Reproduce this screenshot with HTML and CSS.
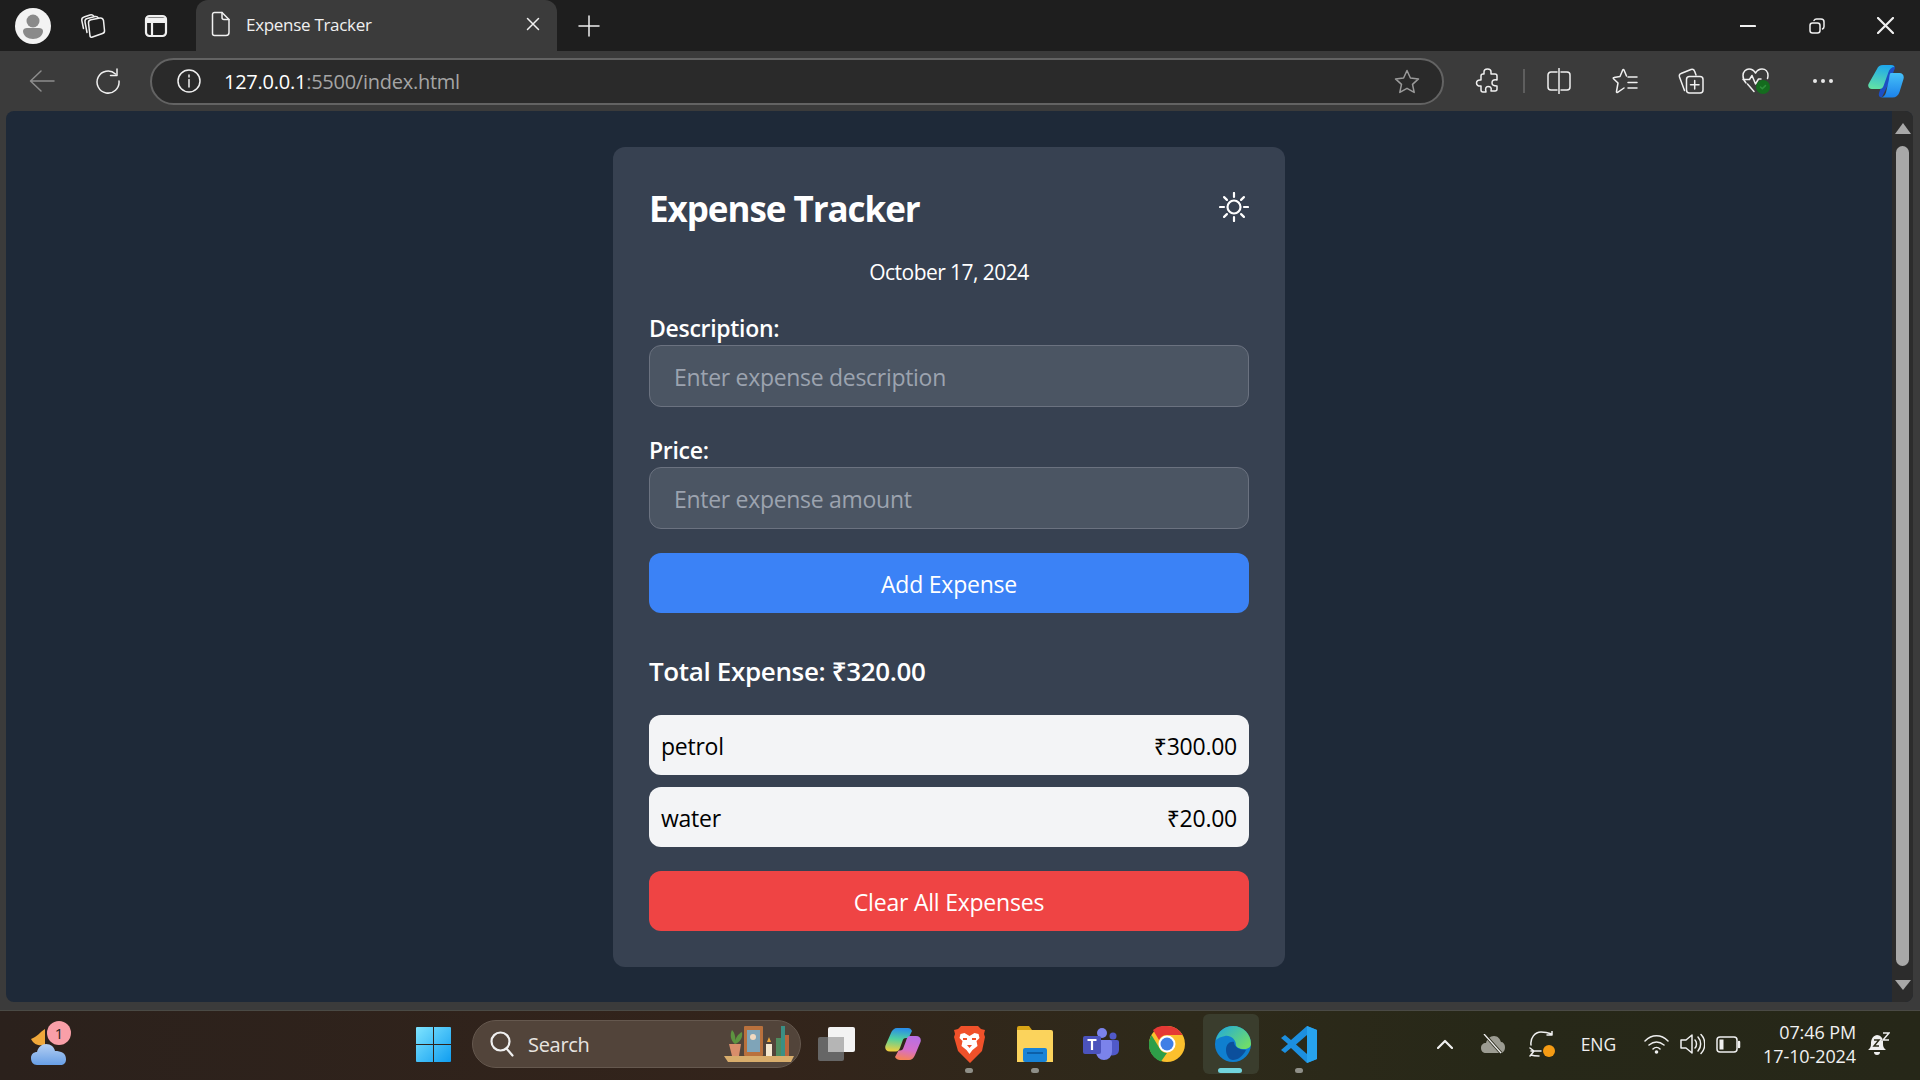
FILE: index.html
```html
<!DOCTYPE html>
<html lang="en">

<head>
    <meta charset="UTF-8">
    <meta name="viewport" content="width=device-width, initial-scale=1.0">
    <title>Expense Tracker</title>
    <link rel="stylesheet" href="styles.css">
</head>

<body>

    <!-- Tab strip -->
    <div class="tabstrip">
        <div class="avatar">
            <svg width="36" height="36" viewBox="0 0 36 36">
                <circle cx="18" cy="18" r="18" fill="#f3f3f3" />
                <circle cx="18" cy="13" r="6.500" fill="#8a8a8a" />
                <path d="M8 23c0-2 2-3 4-3h12c2 0 4 1 4 3 0 5-5 8-10 8s-10-3-10-8z" fill="#8a8a8a" />
            </svg>
        </div>
        <div class="strip-btn strip-btn-first">
            <svg width="26" height="26" viewBox="0 0 26 26" class="ico">
                <path d="M10 23l-1.500-13c-.2-2 .8-3 2.500-3.300l9-1.700c2-.3 3 .7 3.500 2.500l1 10c.2 1.500-.5 2.500-2 3l-10 3.500c-1.500.500-2.300 0-2.500-1z" />
                <path d="M7 19.500L5 9c-.3-2 .5-3.200 2.300-3.500l7.700-2c1.700-.3 2.700.2 3.300 1.500" />
                <path d="M3.500 15.500L1.800 7.500c-.3-2 .5-3 2.200-3.500l6-2c1.800-.4 3 0 3.700 1.200" />
            </svg>
        </div>
        <div class="strip-btn">
            <svg width="24" height="24" viewBox="0 0 24 24" class="ico ico-thick">
                <rect x="2" y="2" width="20" height="20" rx="3.500" />
                <path d="M2.500 4.500h19V8h-19zM8 8v14" fill="#f3f3f3" />
            </svg>
        </div>
        <div class="tab">
            <svg width="20" height="26" viewBox="0 0 20 26" class="ico">
                <path d="M3.500 1.500h7.500l7 7v13a3 3 0 0 1-3 3h-11.500a2 2 0 0 1-2-2v-19a2 2 0 0 1 2-2z" />
                <path d="M11 1.500v5a2 2 0 0 0 2 2h5" />
            </svg>
            <span class="tab-title">Expense Tracker</span>
            <svg width="14" height="14" viewBox="0 0 14 14" class="ico tab-close">
                <path d="M1.500 1.500l11 11M12.500 1.500l-11 11" />
            </svg>
        </div>
        <div class="new-tab">
            <svg width="22" height="22" viewBox="0 0 22 22" class="ico">
                <path d="M11 1v20M1 11h20" />
            </svg>
        </div>
        <div class="window-btns">
            <div class="win-btn">
                <svg width="16" height="4" viewBox="0 0 16 4" class="ico ico-thick"><path d="M0 2h15" /></svg>
            </div>
            <div class="win-btn">
                <svg width="16" height="16" viewBox="0 0 16 16" class="ico">
                    <rect x="1" y="5" width="10" height="10" rx="2.500" />
                    <path d="M5 2.500c.5-1 1-1.500 2.500-1.500H12a3 3 0 0 1 3 3v4.500c0 1.500-.5 2-1.500 2.500" />
                </svg>
            </div>
            <div class="win-btn">
                <svg width="17" height="17" viewBox="0 0 17 17" class="ico ico-thick"><path d="M1 1l15 15M16 1L1 16" /></svg>
            </div>
        </div>
    </div>

    <!-- Toolbar -->
    <div class="toolbar">
        <div class="tool-btn">
            <svg width="26" height="24" viewBox="0 0 26 24" class="ico ico-dim">
                <path d="M25 12H2M12 2L1.500 12 12 22" />
            </svg>
        </div>
        <div class="tool-btn">
            <svg width="26" height="26" viewBox="0 0 26 26" class="ico">
                <path d="M20.500 6A11 11 0 1 0 24 13" />
                <path d="M22 1v6.500h-6.500" />
            </svg>
        </div>
        <div class="address">
            <svg width="24" height="24" viewBox="0 0 24 24" class="ico">
                <circle cx="12" cy="12" r="11" />
                <path d="M12 10.500V18M12 6v2" />
            </svg>
            <span class="url"><span class="url-host">127.0.0.1</span>:5500/index.html</span>
            <svg width="26" height="25" viewBox="0 0 26 25" class="ico ico-star">
                <path d="M13 1.500l3.400 7.500 8.100.9-6 5.500 1.700 8-7.200-4.100-7.200 4.100 1.700-8-6-5.500 8.100-.9z" />
            </svg>
        </div>
        <div class="tool-btn tool-btn-puzzle">
            <svg width="24" height="26" viewBox="0 0 24 26" class="ico">
                <path d="M9 4c0-4 7-4 7 0 0 1 0 1.500 0 2h4c1 0 2 1 2 2v4c-4-1-5 1-5 3s1 3 5 3v3c0 1-1 2-2 2h-4c1-4-1-4.500-3-4.500S10 20 11 24H8c-1 0-2-1-2-2v-4c-6 1-6-7 0-6V8c0-1 1-2 2-2h1z" />
            </svg>
        </div>
        <div class="tool-divider"></div>
        <div class="tool-btn">
            <svg width="24" height="26" viewBox="0 0 24 26" class="ico">
                <path d="M10 4H4a3 3 0 0 0-3 3v12a3 3 0 0 0 3 3h6M14 4h6a3 3 0 0 1 3 3v12a3 3 0 0 1-3 3h-6M12 0.500v25" />
            </svg>
        </div>
        <div class="tool-btn">
            <svg width="26" height="26" viewBox="0 0 26 26" class="ico">
                <path d="M14.500 8l-2.500-6c-.3-.7-1-.7-1.300 0L8 8.500l-6 1c-.8.100-1 .8-.5 1.300L6 15l-1.500 8.500c-.1.800.5 1.100 1.100.8l6.400-4.300" />
                <path d="M16 9h9M16 14.500h9M16 20h9" />
            </svg>
        </div>
        <div class="tool-btn">
            <svg width="26" height="26" viewBox="0 0 26 26" class="ico">
                <path d="M6.500 22.500L1.500 9c-.5-1.500 0-3 1.500-3.500L13 1.500c1.500-.5 3 0 3.500 1.500l1.500 4" />
                <rect x="8.500" y="8.500" width="16.500" height="16.500" rx="3" />
                <path d="M16.700 12.500v8.500M12.500 16.700h8.500" />
            </svg>
        </div>
        <div class="tool-btn">
            <svg width="30" height="28" viewBox="0 0 30 28" class="ico">
                <path d="M4 16C2 14 1 11 1 8.500 1 4.500 4 2 7 2c3 0 5 1.500 6.500 4C15 3.500 17 2 20 2c3.500 0 6 2.500 6 6.500 0 1-.2 2-.5 3" />
                <path d="M1 12.500h6.500l2.500-4 3.500 8.500 3-5h2.500M5.500 17l6.500 7.500" />
                <circle cx="21" cy="20" r="7" fill="#146c1e" stroke="none" />
                <path d="M18.500 20l1.800 1.800 3.200-3.200" stroke="#2f8f3c" />
            </svg>
        </div>
        <div class="tool-btn">
            <svg width="20" height="4" viewBox="0 0 20 4">
                <circle cx="2" cy="2" r="2" fill="#e8e8e8" />
                <circle cx="10" cy="2" r="2" fill="#e8e8e8" />
                <circle cx="18" cy="2" r="2" fill="#e8e8e8" />
            </svg>
        </div>
        <div class="tool-btn tool-btn-copilot">
            <svg width="36" height="33" viewBox="0 0 36 33">
                <defs>
                    <linearGradient id="cpA" x1="0.500" y1="0" x2="0.300" y2="1">
                        <stop offset="0" stop-color="#1fa8ec" />
                        <stop offset="1" stop-color="#62e2a4" />
                    </linearGradient>
                    <linearGradient id="cpB" x1="0.500" y1="0" x2="0.500" y2="1">
                        <stop offset="0" stop-color="#45c0f8" />
                        <stop offset="1" stop-color="#1c82ea" />
                    </linearGradient>
                </defs>
                <path d="M16 0h7c2 0 4 1 4 3l-5 13-8 16c-2 1-4-1-3-4l3-9z" fill="#1c4fc4" />
                <path d="M9 4c1-2.500 3-4 6-4h8c2 0 3 .700 3.500 2-3 0-5 2-6 5l-5 14c-.7 2-2 3-4 3H4c-3 0-4.500-2.500-3.500-5z" fill="url(#cpA)" />
                <path d="M23 8h8.500c3 0 5 2.500 4 6l-4 13c-1 3.500-3.500 5.500-7 5.500H12c3 0 5-1.500 6-5l3-13c.500-3 .500-6.500 2-6.500z" fill="url(#cpB)" />
            </svg>
        </div>
    </div>

    <!-- Browser viewport -->
    <div class="frame">
        <div class="viewport">
            <main class="page">
                <div class="card">
                    <div class="card-head">
                        <h1>Expense Tracker</h1>
                        <svg width="30" height="30" viewBox="0 0 30 30" class="sun">
                            <circle cx="15" cy="15" r="6.500" />
                            <path d="M15 1v4M15 25v4M1 15h4M25 15h4M5.100 5.100l2.800 2.800M22.100 22.100l2.800 2.800M5.100 24.900l2.800-2.800M22.100 7.900l2.800-2.800" />
                        </svg>
                    </div>
                    <p class="date">October 17, 2024</p>
                    <form>
                        <label class="field-label" for="description">Description:</label>
                        <input type="text" id="description" class="form-input" placeholder="Enter expense description">
                        <label class="field-label field-label-next" for="price">Price:</label>
                        <input type="text" id="price" class="form-input" placeholder="Enter expense amount">
                        <button type="button" class="btn btn-add">Add Expense</button>
                    </form>
                    <h2 class="total">Total Expense: ₹320.00</h2>
                    <ul class="expense-list">
                        <li class="expense-item"><span>petrol</span><span>₹300.00</span></li>
                        <li class="expense-item"><span>water</span><span>₹20.00</span></li>
                    </ul>
                    <button type="button" class="btn btn-clear">Clear All Expenses</button>
                </div>
            </main>
            <div class="scrollbar">
                <div class="arrow-up"></div>
                <div class="thumb"></div>
                <div class="arrow-down"></div>
            </div>
        </div>
    </div>

    <!-- Windows taskbar -->
    <footer class="taskbar">
        <div class="weather">
            <svg width="38" height="44" viewBox="0 0 38 44">
                <defs>
                    <linearGradient id="cloud" x1="0" y1="0" x2="0" y2="1">
                        <stop offset="0" stop-color="#b4cff2" />
                        <stop offset="1" stop-color="#689fe6" />
                    </linearGradient>
                </defs>
                <path d="M15 7C10 10 7 15 1 17c3 6 8 7 14 6z" fill="#f0a83a" />
                <path d="M7 43c-4 0-6-3-6-7s3-6 6-6c1-5 5-8 9-8 5 0 8 3 9 7 6 0 11 2 11 8 0 4-2 6-6 6z" fill="url(#cloud)" />
            </svg>
            <span class="weather-badge">1</span>
        </div>

        <div class="task-center">
            <svg width="35" height="35" viewBox="0 0 35 35" class="win-logo">
                <defs>
                    <linearGradient id="winA" x1="0" y1="0" x2="1" y2="1">
                        <stop offset="0" stop-color="#7fe4ff" />
                        <stop offset="1" stop-color="#0f9df0" />
                    </linearGradient>
                </defs>
                <path d="M1 0h16v17H0V1a1 1 0 0 1 1-1zM18 0h16a1 1 0 0 1 1 1v16H18zM0 18h17v17H1a1 1 0 0 1-1-1zM18 18h17v16a1 1 0 0 1-1 1H18z" fill="url(#winA)" />
            </svg>
            <div class="search">
                <svg width="24" height="26" viewBox="0 0 24 26" class="ico ico-thick">
                    <circle cx="10.500" cy="10.500" r="9" />
                    <path d="M16.500 17.500l6 7" />
                </svg>
                <span class="search-text">Search</span>
                <svg width="70" height="44" viewBox="0 0 70 44" class="search-art">
                    <path d="M0 34h70l-3 6H4z" fill="#d8ad6c" />
                    <path d="M5 22h12l-2 12H8z" fill="#d98e6b" />
                    <path d="M11 22C6 18 6 12 8 8c3 3 4 8 3 14zM11 22c0-6 3-10 7-12 1 6-2 10-7 12z" fill="#5d9440" />
                    <rect x="20" y="4" width="19" height="30" rx="1" fill="#b9713d" />
                    <rect x="23" y="8" width="13" height="22" fill="#7fa4b8" />
                    <circle cx="29" cy="15" r="3" fill="#f2d9c0" />
                    <rect x="42" y="22" width="6" height="12" fill="#f4e8cf" />
                    <path d="M45 15l2 5h-4z" fill="#f0a83a" />
                    <rect x="52" y="16" width="5" height="18" fill="#4f8a5e" />
                    <rect x="57" y="4" width="4" height="30" fill="#3b8f85" />
                    <rect x="61" y="13" width="4" height="21" fill="#b9663d" />
                </svg>
            </div>
            <div class="task-slot">
                <svg width="38" height="34" viewBox="0 0 38 34">
                    <rect x="0" y="10" width="26" height="24" rx="2" fill="#666" />
                    <rect x="10" y="0" width="27" height="25" rx="2" fill="#f3f3f3" />
                    <rect x="10" y="10" width="16" height="15" fill="#b5b5b5" />
                </svg>
            </div>
            <div class="task-slot">
                <svg width="36" height="34" viewBox="0 0 36 34">
                    <defs>
                        <linearGradient id="coA" x1="0.300" y1="0" x2="0.200" y2="1">
                            <stop offset="0" stop-color="#2a8fe8" />
                            <stop offset="0.450" stop-color="#4fd0a0" />
                            <stop offset="1" stop-color="#f6cf3a" />
                        </linearGradient>
                        <linearGradient id="coB" x1="0.700" y1="0" x2="0.500" y2="1">
                            <stop offset="0" stop-color="#b66fe6" />
                            <stop offset="0.600" stop-color="#d66fc8" />
                            <stop offset="1" stop-color="#f4825c" />
                        </linearGradient>
                    </defs>
                    <path d="M16 1h7c2 0 3 1 4 3l-3.500 7H21c-2 0-3 1-3.500 3L15 21c-1 2-2 3.500-4 3.500H5c-4 0-5.500-3-4.500-6L6 6c1-3 3.500-5 6-5z" fill="url(#coA)" />
                    <path d="M25 9h6c4 0 5.500 3 4.500 6L30 28c-1 3-3.500 5-6 5h-9c-2 0-4-1-5-3l3.500-6.500H15c2 0 3-1 3.500-3L21 14c.7-3 2-5 4-5z" fill="url(#coB)" />
                </svg>
            </div>
            <div class="task-slot task-running">
                <svg width="31" height="38" viewBox="0 0 31 38">
                    <path d="M7 1h17l3 3 4 1-1 4 1 3-3 14-12 12-12-12L0 12l1-3-1-4 4-1z" fill="#f0512a" />
                    <path d="M15.500 11l-5-3-4 1-1 4 3 3-1 5 5 4 3 4 3-4 5-4-1-5 3-3-1-4-4-1z" fill="#fff" />
                    <path d="M13 20h5l-2.500 3z" fill="#f0512a" />
                    <path d="M9 14h4M18 14h4" stroke="#f0512a" stroke-width="2" />
                </svg>
            </div>
            <div class="task-slot task-running">
                <svg width="36" height="36" viewBox="0 0 36 36">
                    <path d="M0 2a2 2 0 0 1 2-2h10l3 4H0z" fill="#d9a516" />
                    <path d="M0 4h34a2 2 0 0 1 2 2v30H0z" fill="#fbd35c" />
                    <rect x="6" y="22" width="24" height="14" rx="2" fill="#1883d7" />
                    <rect x="10" y="26" width="16" height="2" fill="#0c5fa8" />
                </svg>
            </div>
            <div class="task-slot">
                <svg width="36" height="32" viewBox="0 0 36 32">
                    <circle cx="19" cy="5" r="5" fill="#7b83eb" />
                    <circle cx="30" cy="8" r="3.500" fill="#5059c9" />
                    <path d="M24 12h10a2 2 0 0 1 2 2v8a6 6 0 0 1-10 4z" fill="#5059c9" />
                    <path d="M10 12h17a2 2 0 0 1 2 2v10a8 8 0 0 1-16 0z" fill="#7b83eb" />
                    <rect x="0" y="8" width="18" height="18" rx="2" fill="#4b53bc" />
                    <path d="M4.500 12h9M9 12v10" stroke="#fff" stroke-width="2.200" fill="none" />
                </svg>
            </div>
            <div class="task-slot">
                <svg width="36" height="36" viewBox="0 0 36 36">
                    <circle cx="18" cy="18" r="18" fill="#fbc02d" />
                    <path d="M18 0a18 18 0 0 1 15.600 9H18a9 9 0 0 0-8 5L4 4a18 18 0 0 1 14-4z" fill="#e53935" />
                    <path d="M2.500 9L11 23l-0 0a9 9 0 0 0 7 4l-6 8.500A18 18 0 0 1 2.500 9z" fill="#2e9e48" />
                    <circle cx="18" cy="18" r="8.500" fill="#fff" />
                    <circle cx="18" cy="18" r="6.500" fill="#3f7fe6" />
                </svg>
            </div>
            <div class="task-slot task-active">
                <div class="active-back"></div>
                <svg width="36" height="36" viewBox="0 0 36 36" class="edge-logo">
                    <defs>
                        <linearGradient id="edA" x1="0" y1="0" x2="1" y2="0.700">
                            <stop offset="0" stop-color="#1ea8e0" />
                            <stop offset="1" stop-color="#6fdc6a" />
                        </linearGradient>
                    </defs>
                    <circle cx="18" cy="18" r="18" fill="#0f7fd0" />
                    <path d="M1 14C3 5 10 0 18 0c10 0 18 8 18 18 0 3-3 5-7 5-5 0-8-2-8-4 0-6-6-10-11-9-4 .8-7 2-9 4z" fill="url(#edA)" />
                    <path d="M11 24c0-6 4-9 8-8 0 4 4 8 12 8-3 6-8 10-13 10-4 0-7-5-7-10z" fill="#0b4f9c" />
                </svg>
            </div>
            <div class="task-slot task-running">
                <svg width="36" height="37" viewBox="0 0 36 37">
                    <path d="M26 0l10 4v29l-10 4L10 22l-6 5-4-3 7-6-7-6 4-3 6 5z" fill="#1c8fdf" />
                    <path d="M26 9v19l-11-9.500z" fill="#2a2a19" />
                    <path d="M26 0l10 4v29l-10 4z" fill="#27a3ee" />
                </svg>
            </div>
        </div>

        <div class="tray">
            <svg width="16" height="10" viewBox="0 0 16 10" class="ico ico-thick tray-chevron">
                <path d="M1 9l7-7 7 7" />
            </svg>
            <svg width="25" height="20" viewBox="0 0 25 20" class="tray-cloud">
                <path d="M6 19c-3 0-5-2-5-5s2-5 5-5c1-4 4-7 8-7s6 3 7 6c2 0 4 2 4 5 0 4-2 6-5 6z" fill="#9c9c92" />
                <path d="M5 1l16 18" stroke="#2a2a19" stroke-width="3" />
                <path d="M4 0l17 19" stroke="#f0f0f0" stroke-width="1.300" />
            </svg>
            <div class="tray-sync">
                <svg width="25" height="26" viewBox="0 0 25 26" class="ico">
                    <path d="M2 14C1 7 6 1 12 1c4 0 8 1 11 2M23 0v4h-5M2 20h10M1 25l4-5-4-3M2 24c3 1 5 1 8 1" />
                </svg>
                <span class="sync-dot"></span>
            </div>
            <span class="tray-lang">ENG</span>
            <svg width="25" height="20" viewBox="0 0 25 20" class="ico tray-wifi">
                <path d="M1 7c7-7 16-7 23 0M5 11c5-4 10-4 15 0M9 15c2-2 5-2 7 0" />
                <circle cx="12.500" cy="18" r="1.800" fill="#f0f0f0" stroke="none" />
            </svg>
            <svg width="25" height="22" viewBox="0 0 25 22" class="ico tray-sound">
                <path d="M1 7h5l6-5v18l-6-5H1zM15 7c2 2 2 6 0 8M18 4c3.500 4 3.500 10 0 14M21 1.500c5 5 5 14 0 19" />
            </svg>
            <svg width="25" height="17" viewBox="0 0 25 17" class="ico tray-battery">
                <rect x="1" y="1" width="20" height="15" rx="3" />
                <rect x="3.500" y="3.500" width="4" height="10" fill="#f0f0f0" stroke="none" />
                <path d="M23 6v5" stroke-width="2.500" />
            </svg>
            <div class="clock">
                <span>07:46 PM</span>
                <span>17-10-2024</span>
            </div>
            <svg width="22" height="24" viewBox="0 0 22 24" class="tray-bell">
                <path d="M9 3C4 4 3 8 3 12c0 3-1 4-3 6h18c-2-2-3-3-3-6V9C15 6 12 3 9 3z" fill="#f0f0f0" />
                <path d="M6 20h6a3 3 0 0 1-6 0z" fill="#f0f0f0" />
                <path d="M6 8h5l-5 6h5M15 1h6l-6 7h6" stroke="#2a2a19" stroke-width="1.500" fill="none" />
                <path d="M15 1h6l-6 7h6" stroke="#f0f0f0" stroke-width="1.500" fill="none" />
            </svg>
        </div>
    </footer>

</body>

</html>
```

FILE: styles.css
```css
/* Basic layout */
body {
    font-family: "Open Sans", "Noto Sans", "DejaVu Sans", sans-serif;
    margin: 0;
    padding: 0;
    height: 100vh;
    display: flex;
    flex-direction: column;
    overflow: hidden;
    background-color: #3b3b3b;
}

/* Shared icon strokes */
.ico {
    fill: none;
    stroke: #f0f0f0;
    stroke-width: 1.500;
    stroke-linecap: round;
    stroke-linejoin: round;
    flex-shrink: 0;
}

.ico-thick {
    stroke-width: 2.200;
}

.ico-dim {
    stroke: #8d8d8d;
}

.ico-star {
    stroke: #9a9a9a;
    margin-left: auto;
}

/* Tab strip */
.tabstrip {
    height: 51px;
    flex-shrink: 0;
    background-color: #1e1e1e;
    display: flex;
    align-items: center;
    padding-left: 15px;
}

.avatar {
    display: flex;
}

.strip-btn {
    width: 63px;
    display: flex;
    justify-content: center;
}

.strip-btn-first {
    margin-left: 11px;
    width: 62px;
}

.tab {
    align-self: flex-end;
    margin-left: 9px;
    width: 361px;
    height: 51px;
    box-sizing: border-box;
    background-color: #3b3b3b;
    border-radius: 12px 12px 0 0;
    display: flex;
    align-items: center;
    padding: 0 17px 3px 15px;
    color: #f0f0f0;
}

.tab-title {
    margin-left: 15px;
    font-size: 17px;
    letter-spacing: -0.3px;
    white-space: nowrap;
}

.tab-close {
    margin-left: auto;
}

.new-tab {
    margin-left: 21px;
    display: flex;
}

.window-btns {
    margin-left: auto;
    display: flex;
    height: 100%;
}

.win-btn {
    width: 69px;
    display: flex;
    align-items: center;
    justify-content: center;
}

/* Toolbar */
.toolbar {
    height: 60px;
    flex-shrink: 0;
    background-color: #3b3b3b;
    display: flex;
    align-items: center;
    padding-left: 9px;
}

.tool-btn {
    width: 66px;
    display: flex;
    justify-content: center;
    flex-shrink: 0;
}

.tool-btn-puzzle {
    margin-left: 10px;
}

.tool-btn-copilot {
    width: 60px;
}

.tool-divider {
    width: 2px;
    height: 24px;
    background-color: #5e5e5e;
    margin: 0 1px 0 3px;
    flex-shrink: 0;
}

.address {
    width: 1294px;
    height: 47px;
    margin-left: 9px;
    box-sizing: border-box;
    flex-shrink: 0;
    border: 2px solid #636363;
    border-radius: 24px;
    background-color: #2a2a2a;
    display: flex;
    align-items: center;
    padding: 0 22px 0 25px;
}

.url {
    margin-left: 23px;
    font-size: 20px;
    letter-spacing: -0.25px;
    color: #a5a5a5;
}

.url-host {
    color: #fff;
}

/* Browser viewport */
.frame {
    flex: 1;
    min-height: 0;
    padding: 0 7px 8px 6px;
    display: flex;
}

.viewport {
    flex: 1;
    background-color: #1e2938;
    border-radius: 8px;
    display: flex;
    overflow: hidden;
}

.page {
    flex: 1;
    display: flex;
    justify-content: center;
    padding-top: 36px;
}

/* Expense card */
.card {
    width: 672px;
    height: 820px;
    box-sizing: border-box;
    background-color: #374151;
    border-radius: 12px;
    padding: 36px;
    color: #fff;
}

.card-head {
    display: flex;
    justify-content: space-between;
    align-items: center;
    height: 48px;
}

.card-head h1 {
    margin: 0;
    padding-top: 2px;
    font-size: 35px;
    font-weight: 700;
    letter-spacing: -1.05px;
}

.sun {
    fill: none;
    stroke: #fff;
    stroke-width: 2.200;
    stroke-linecap: round;
}

.date {
    margin: 23px 0 19px;
    height: 36px;
    line-height: 36px;
    text-align: center;
    font-size: 21px;
    letter-spacing: -0.55px;
}

.field-label {
    display: block;
    height: 36px;
    line-height: 38px;
    font-size: 23px;
    font-weight: 600;
    letter-spacing: -0.3px;
}

.field-label-next {
    margin-top: 24px;
}

.form-input {
    display: block;
    width: 100%;
    height: 62px;
    box-sizing: border-box;
    padding: 2px 24px 0;
    background-color: #4b5563;
    border: 1px solid #6b7280;
    border-radius: 12px;
    color: #fff;
    font-family: inherit;
    font-size: 23px;
    letter-spacing: -0.3px;
}

.form-input::placeholder {
    color: #9ca3af;
    opacity: 1;
}

.btn {
    display: block;
    width: 100%;
    height: 60px;
    padding: 2px 0 0;
    border: none;
    border-radius: 12px;
    color: #fff;
    font-family: inherit;
    font-size: 23px;
    letter-spacing: -0.22px;
    cursor: pointer;
}

.btn-add {
    margin-top: 24px;
    background-color: #3b82f6;
}

.btn-clear {
    margin-top: 24px;
    background-color: #ef4444;
}

.total {
    margin: 36px 0 24px;
    height: 42px;
    line-height: 44px;
    font-size: 26px;
    font-weight: 600;
    letter-spacing: -0.35px;
}

.expense-list {
    list-style: none;
    margin: 0;
    padding: 0;
    display: flex;
    flex-direction: column;
    gap: 12px;
}

.expense-item {
    height: 60px;
    box-sizing: border-box;
    padding: 2px 12px 0;
    background-color: #f3f4f6;
    border-radius: 12px;
    color: #000;
    font-size: 23px;
    letter-spacing: -0.25px;
    display: flex;
    align-items: center;
    justify-content: space-between;
}

/* Scrollbar */
.scrollbar {
    width: 21px;
    flex-shrink: 0;
    display: flex;
    flex-direction: column;
    align-items: center;
    background-color: #2c2c2c;
    padding: 12px 0;
    box-sizing: border-box;
}

.arrow-up {
    width: 0;
    height: 0;
    border: 8px solid transparent;
    border-top: none;
    border-bottom: 11px solid #a8a8a8;
}

.arrow-down {
    width: 0;
    height: 0;
    border: 8px solid transparent;
    border-bottom: none;
    border-top: 10px solid #a8a8a8;
}

.thumb {
    flex: 1;
    width: 13px;
    margin: 12px 0 14px;
    border-radius: 7px;
    background-color: #a8a8a8;
}

/* Windows taskbar */
.taskbar {
    height: 70px;
    flex-shrink: 0;
    box-sizing: border-box;
    border-top: 1px solid #4a4a45;
    background: linear-gradient(90deg, #2b211c 0%, #33241b 40%, #2e2a1a 62%, #272818 78%, #262718 100%);
    display: flex;
    align-items: center;
    padding: 0 0 3px 30px;
    color: #f0f0f0;
}

.weather {
    position: relative;
    display: flex;
    width: 38px;
    height: 44px;
}

.weather-badge {
    position: absolute;
    left: 17px;
    top: -1px;
    width: 24px;
    height: 24px;
    border-radius: 50%;
    background-color: #f99fa8;
    color: #222;
    font-size: 15px;
    text-align: center;
    line-height: 24px;
}

.task-center {
    margin-left: 348px;
    display: flex;
    align-items: center;
}

.win-logo {
    flex-shrink: 0;
}

.search {
    width: 329px;
    height: 48px;
    margin-left: 21px;
    box-sizing: border-box;
    border-radius: 24px;
    background-color: #52443a;
    border: 1px solid #65584e;
    display: flex;
    align-items: center;
    padding-left: 17px;
}

.search-text {
    margin-left: 14px;
    font-size: 20px;
    letter-spacing: -0.3px;
    color: #e8e4e0;
}

.search-art {
    margin-left: auto;
    margin-right: 6px;
}

.task-slot {
    position: relative;
    width: 66px;
    height: 60px;
    display: flex;
    align-items: center;
    justify-content: center;
}

.task-slot:nth-child(3) {
    margin-left: 3px;
}

.task-running::after {
    content: "";
    position: absolute;
    left: 29px;
    bottom: 1px;
    width: 8px;
    height: 5px;
    border-radius: 3px;
    background-color: #8f8f88;
}

.task-active::after {
    content: "";
    position: absolute;
    left: 18px;
    bottom: 1px;
    width: 24px;
    height: 5px;
    border-radius: 3px;
    background-color: #72d4dc;
}

.active-back {
    position: absolute;
    left: 3px;
    top: 0;
    width: 56px;
    height: 60px;
    border-radius: 6px;
    background-color: #3a3d2d;
}

.edge-logo {
    position: relative;
}

.tray {
    margin-left: auto;
    display: flex;
    align-items: center;
    padding-right: 30px;
}

.tray-cloud {
    margin-left: 27px;
}

.tray-sync {
    position: relative;
    margin-left: 24px;
    display: flex;
}

.sync-dot {
    position: absolute;
    right: -1px;
    bottom: 0;
    width: 12px;
    height: 12px;
    border-radius: 50%;
    background-color: #f59b14;
}

.tray-lang {
    margin-left: 27px;
    font-size: 17.500px;
    letter-spacing: -0.1px;
}

.tray-wifi {
    margin-left: 28px;
}

.tray-sound,
.tray-battery {
    margin-left: 11px;
}

.clock {
    margin-left: 22px;
    display: flex;
    flex-direction: column;
    align-items: flex-end;
    font-size: 18px;
    line-height: 24px;
    letter-spacing: -0.1px;
}

.tray-bell {
    margin-left: 12px;
}
```
